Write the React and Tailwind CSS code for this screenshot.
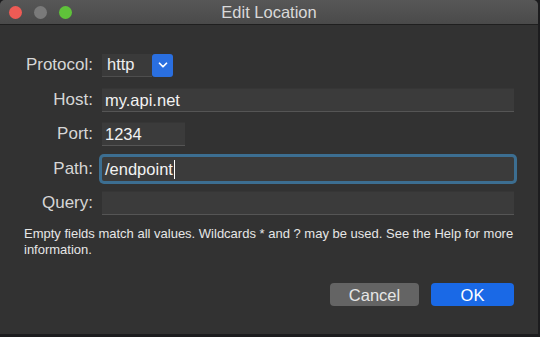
import { ChevronDown } from "lucide-react";

const font = { fontFamily: '"Liberation Sans", Arial, sans-serif' };

function Field({ value, width = "w-[412px]", focused = false, caret = false }) {
  return (
    <div
      className={[
        "flex h-[24px] items-center bg-[#3b3b3b] px-[3px] text-[16.5px] leading-[24px] text-[#f2f2f2]",
        width,
        focused
          ? "shadow-[0_0_0_3px_#3c6e91] rounded-[2px]"
          : "border-b border-[#555] shadow-[inset_0_1px_0_#363636]",
      ].join(" ")}
    >
      <span>{value}</span>
      {caret && <span className="ml-[1px] h-[19px] w-[1px] bg-white" />}
    </div>
  );
}

function Row({ label, children, className = "" }) {
  return (
    <div className={["flex h-[24px] items-center", className].join(" ")}>
      <div className="w-[102px] pr-[9px] text-right text-[17px] leading-[24px] text-[#d6d6d6]">{label}</div>
      {children}
    </div>
  );
}

export default function App() {
  return (
    <div className="h-[337px] w-[540px] overflow-hidden bg-[#1c1c1e]" style={font}>
      <div className="flex h-[334px] w-[538px] flex-col overflow-hidden rounded-t-[5px] bg-[#323232]">
        {/* title bar */}
        <div className="relative flex h-[25px] items-center border-b border-[#1f1f1f] bg-gradient-to-b from-[#575757] to-[#4a4a4a]">
          <div className="flex gap-[12px] pl-[9px]">
            <span className="h-[13px] w-[13px] rounded-full bg-[#ee5b55]" />
            <span className="h-[13px] w-[13px] rounded-full bg-[#7a7a7a]" />
            <span className="h-[13px] w-[13px] rounded-full bg-[#5fc23a]" />
          </div>
          <div className="absolute inset-0 flex items-center justify-center text-[16.5px] text-[#d9d9d9]">
            Edit Location
          </div>
        </div>

        <div className="flex flex-col pt-[28px]">
          <Row label="Protocol:">
            <div className="flex h-[23px] items-stretch">
              <div className="flex w-[50px] items-center border-b border-[#4e4e4e] bg-[#3a3a3a] pl-[5px] text-[16.5px] text-[#eeeeee]">
                http
              </div>
              <div className="flex w-[21px] items-center justify-center rounded-[3px] bg-[#2a6fe0]">
                <ChevronDown size={14} strokeWidth={3} className="text-white" />
              </div>
            </div>
          </Row>
          <Row label="Host:" className="mt-[11px]">
            <Field value="my.api.net" />
          </Row>
          <Row label="Port:" className="mt-[10px]">
            <Field value="1234" width="w-[83px]" />
          </Row>
          <Row label="Path:" className="mt-[11px]">
            <Field value="/endpoint" focused caret />
          </Row>
          <Row label="Query:" className="mt-[10px]">
            <Field value="" />
          </Row>

          <p className="mt-[11px] pl-[24px] pr-[20px] text-[13px] leading-[16px] text-[#e6e6e6]">
            Empty fields match all values. Wildcards * and ? may be used. See the Help for more
            information.
          </p>

          <div className="mt-[25px] flex justify-end gap-[12px] pr-[24px]">
            <button className="h-[23px] w-[89px] rounded-[4px] bg-[#646464] text-[16.5px] text-[#e6e6e6]">
              Cancel
            </button>
            <button className="h-[23px] w-[83px] rounded-[4px] bg-[#1a69e6] text-[16.5px] text-white">
              OK
            </button>
          </div>
        </div>
      </div>
    </div>
  );
}
